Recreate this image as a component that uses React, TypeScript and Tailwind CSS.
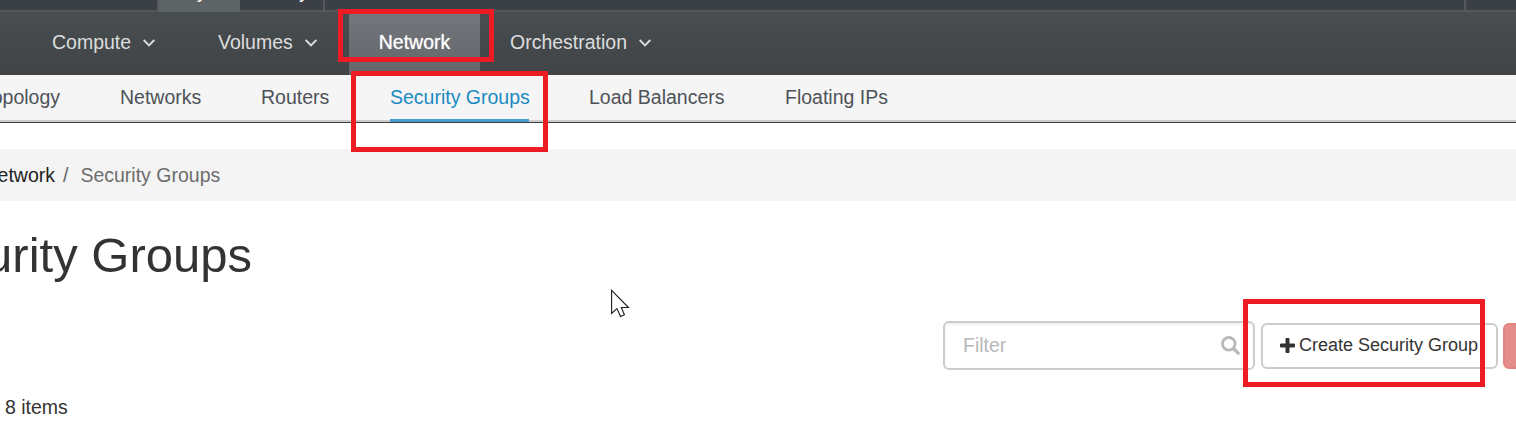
import React from "react";

function Chevron() {
  return (
    <svg className="ml-3 mt-[3px] h-2 w-3 shrink-0" viewBox="0 0 12 8" fill="none" stroke="#dcdddd" strokeWidth="1.9">
      <path d="M0.7 1 L6 6.3 L11.3 1" />
    </svg>
  );
}

function MenuItem({ label }: { label: string }) {
  return (
    <div className="flex h-full items-center text-[#dcdddd]">
      <span>{label}</span>
      <Chevron />
    </div>
  );
}

export default function App() {
  return (
    <div className="relative h-[436px] w-[1516px] overflow-hidden bg-white font-['Liberation_Sans',Arial,sans-serif] text-[19.5px] leading-[22px] text-[#333]">
      <div className="flex h-3 border-b-2 border-[#54575b] bg-[#3b3f46]">
        <div className="w-[157px]" />
        <div className="h-3 w-[83px] overflow-hidden border-l-2 border-[#54575b] bg-[#5e6366] text-white">
          <div className="-mt-[20px] pl-[38px]">y</div>
        </div>
        <div className="h-[10px] w-[85px] overflow-hidden border-r-2 border-[#54575b] text-white">
          <div className="-mt-[20px] pl-[59px]">y</div>
        </div>
        <div className="w-[1141px] border-r-2 border-[#54575b]" />
      </div>

      <nav className="flex h-[63px] bg-linear-to-b from-[#484d50] to-[#404447] pl-[52px]">
        <div className="w-[166px] pb-1"><MenuItem label="Compute" /></div>
        <div className="w-[131px] pb-1"><MenuItem label="Volumes" /></div>
        <div className="flex w-[131px] items-center justify-center bg-linear-to-b from-[#73767b] to-[#63676b] pb-1 text-white [text-shadow:0_0_1px_rgba(255,255,255,0.7)]">Network</div>
        <div className="ml-[30px] pb-1"><MenuItem label="Orchestration" /></div>
      </nav>

      <nav className="flex h-12 border-b border-[#3b3d40] bg-[#f5f5f5] text-[#4d5258]">
        <div className="flex h-[47px] w-full border-b-2 border-[#ccc] pt-[11px] whitespace-nowrap">
          <div className="flex w-[60px] justify-end">Topology</div>
          <div className="ml-[60px] w-[141px]">Networks</div>
          <div className="w-[129px]">Routers</div>
          <div className="h-9 w-[139px] border-b-[3px] border-[#4a9bd1] text-[#1a8ac2]">Security Groups</div>
          <div className="ml-[60px] w-[196px]">Load Balancers</div>
          <div>Floating IPs</div>
        </div>
      </nav>

      <div className="mt-[26px] flex h-[52px] items-center bg-[#f4f4f4] whitespace-nowrap">
        <div className="flex w-[55px] justify-end text-[#222]">Network</div>
        <span className="ml-2 text-[#666]">/</span>
        <span className="ml-[12px] text-[#6d6d6d]">Security Groups</span>
      </div>

      <h1 className="mt-[26px] flex h-14 w-[252px] justify-end text-[49px] leading-[56px] whitespace-nowrap">Security Groups</h1>

      <div className="mt-[38px] flex h-[49px] pl-[943px]">
        <div className="flex h-[49px] w-[312px] shrink-0 items-center justify-between rounded-md border-2 border-[#ccc] pr-[13px] pl-[18px] text-[#b8b8b8] shadow-[inset_0_2px_2px_rgba(0,0,0,0.06)]">
          <span className="pb-[2px]">Filter</span>
          <svg className="h-[19px] w-[19px]" viewBox="0 0 19 19" fill="none" stroke="#b8b8b8">
            <circle cx="7.8" cy="7.8" r="6.3" strokeWidth="2.8" />
            <path d="M12.5 12.5 L17.2 17.2" strokeWidth="3.2" strokeLinecap="round" />
          </svg>
        </div>
        <button className="mt-[2px] ml-[6px] flex h-[46px] w-[237px] shrink-0 items-center rounded-md border-2 border-[#ccc] pb-[2px] pl-[17px] text-[18px] whitespace-nowrap">
          <svg className="mr-1 h-[15px] w-[15px] shrink-0" viewBox="0 0 15 15">
            <path d="M6 0.5 H9 V6 H14.5 V9 H9 V14.5 H6 V9 H0.5 V6 H6 Z" fill="#333" stroke="#333" strokeWidth="1" strokeLinejoin="round" />
          </svg>
          Create Security Group
        </button>
        <div className="mt-[2px] ml-[5px] h-[46px] w-10 shrink-0 rounded-md border-2 border-[#e28582] bg-[#e48e8b]" />
      </div>

      <div className="mt-[26px] pl-[5px]">8 items</div>

      <div className="absolute top-[9px] left-[338px] h-[53px] w-[156px] border-5 border-[#ed1c24]" />
      <div className="absolute top-[71px] left-[351px] h-[81px] w-[197px] border-5 border-[#ed1c24]" />
      <div className="absolute top-[299px] left-[1243px] h-[88px] w-[242px] border-5 border-[#ed1c24]" />
      <svg className="absolute top-[289px] left-[611px] h-[29px] w-[19px]" viewBox="0 0 19 29" fill="#fff" stroke="#1c1c24" strokeWidth="1.1">
        <path d="M0.6 1.4 V24.5 L5.9 19.6 L9.6 27.6 L13.4 25.7 L10.3 18.5 H17.5 Z" />
      </svg>
    </div>
  );
}
